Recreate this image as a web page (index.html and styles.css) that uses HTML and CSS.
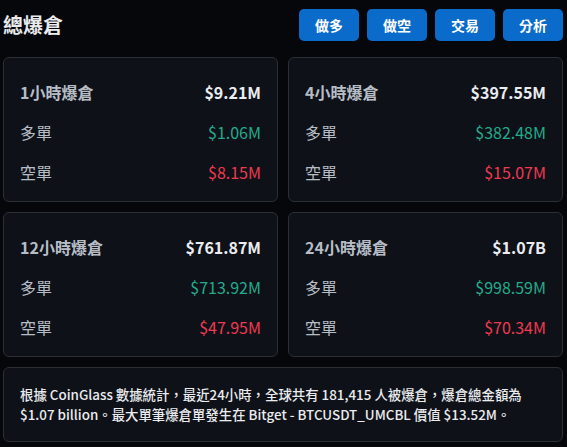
FILE: index.html
```html
<!DOCTYPE html>
<html lang="zh-Hant">
<head>
<meta charset="utf-8">
<title>總爆倉</title>
<link rel="stylesheet" href="styles.css">
</head>
<body>
<div class="page">
  <header class="header">
    <h1 class="title">總爆倉</h1>
    <nav class="actions">
      <button class="btn">做多</button>
      <button class="btn">做空</button>
      <button class="btn">交易</button>
      <button class="btn">分析</button>
    </nav>
  </header>

  <section class="grid">
    <div class="card">
      <div class="row head"><span class="label">1小時爆倉</span><span class="value">$9.21M</span></div>
      <div class="row"><span class="label">多單</span><span class="value up">$1.06M</span></div>
      <div class="row"><span class="label">空單</span><span class="value down">$8.15M</span></div>
    </div>
    <div class="card">
      <div class="row head"><span class="label">4小時爆倉</span><span class="value">$397.55M</span></div>
      <div class="row"><span class="label">多單</span><span class="value up">$382.48M</span></div>
      <div class="row"><span class="label">空單</span><span class="value down">$15.07M</span></div>
    </div>
    <div class="card">
      <div class="row head"><span class="label">12小時爆倉</span><span class="value">$761.87M</span></div>
      <div class="row"><span class="label">多單</span><span class="value up">$713.92M</span></div>
      <div class="row"><span class="label">空單</span><span class="value down">$47.95M</span></div>
    </div>
    <div class="card">
      <div class="row head"><span class="label">24小時爆倉</span><span class="value">$1.07B</span></div>
      <div class="row"><span class="label">多單</span><span class="value up">$998.59M</span></div>
      <div class="row"><span class="label">空單</span><span class="value down">$70.34M</span></div>
    </div>
  </section>

  <p class="summary">根據 CoinGlass 數據統計，最近24小時，全球共有 181,415 人被爆倉，爆倉總金額為<br>$1.07 billion。最大單筆爆倉單發生在 Bitget - BTCUSDT_UMCBL 價值 $13.52M。</p>
</div>
</body>
</html>
```

FILE: styles.css
```css
* { box-sizing: border-box; }

html, body {
  margin: 0;
  padding: 0;
  background: #05070b;
}

body {
  font-family: "Noto Sans CJK TC", "Noto Sans", sans-serif;
  color: #eaecef;
}

.page {
  width: 567px;
  padding: 9px 4px 0 3px;
}

.header {
  display: flex;
  justify-content: space-between;
  align-items: center;
  height: 32px;
  margin-bottom: 16px;
}

.title {
  margin: 0;
  font-size: 20px;
  font-weight: 700;
  line-height: 28px;
  color: #eaecef;
}

.actions {
  display: flex;
  gap: 8px;
}

.btn {
  width: 60px;
  height: 32px;
  border: none;
  border-radius: 5px;
  background: #0b6bcb;
  color: #ffffff;
  font-family: inherit;
  font-size: 14px;
  font-weight: 700;
  padding: 0;
}

.grid {
  display: grid;
  grid-template-columns: 275px 275px;
  grid-auto-rows: 145px;
  gap: 10px;
}

.card {
  background: #0e1117;
  border: 1px solid #2b2f36;
  border-radius: 6px;
  padding: 14px 16px 0 16px;
  display: flex;
  flex-direction: column;
}

.row {
  height: 40px;
  display: flex;
  justify-content: space-between;
  align-items: center;
  font-size: 16px;
}

.label { color: #b7bdc6; }
.value { color: #eaecef; }

.head .label,
.head .value { font-weight: 700; }

.up { color: #22ab8c; }
.down { color: #ee3a52; }

.summary {
  margin: 10px 0 0 0;
  height: 75px;
  background: #0e1117;
  border: 1px solid #2b2f36;
  border-radius: 6px;
  padding: 16px 16px 0 16px;
  font-size: 13.4px;
  line-height: 20px;
  font-weight: 500;
  color: #eaecef;
  white-space: nowrap;
}
```
